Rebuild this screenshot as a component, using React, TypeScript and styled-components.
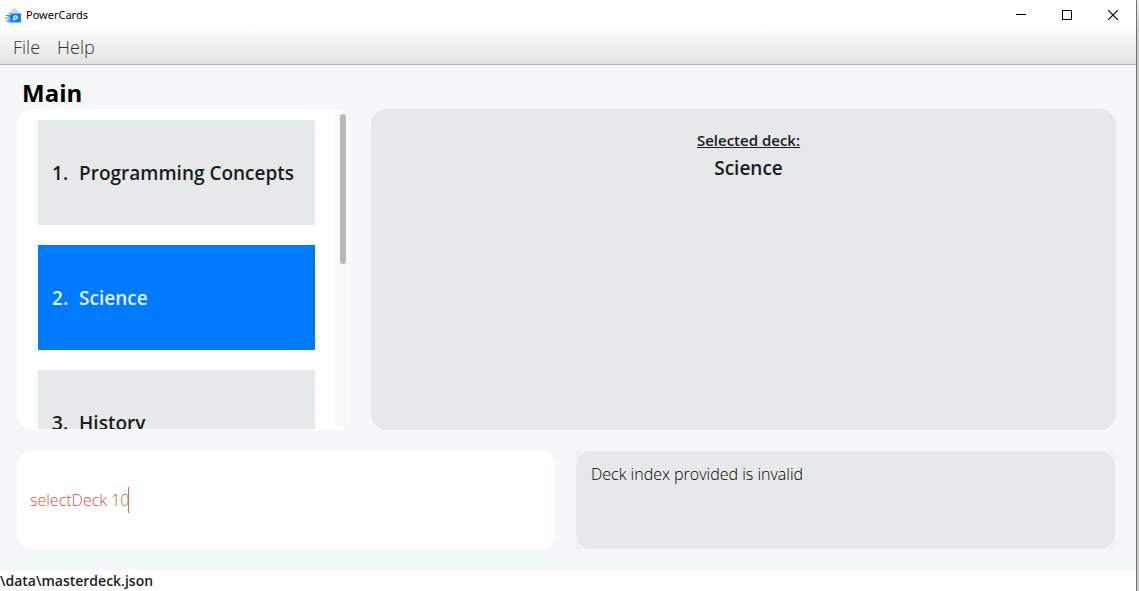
import React, { useState } from "react";
import styled, { createGlobalStyle } from "styled-components";

const GlobalStyle = createGlobalStyle`
  * { box-sizing: border-box; }
  body {
    margin: 0;
    background: #c8c8c8;
    color: #1a1c1d;
    font-family: "Open Sans", "Noto Sans", sans-serif;
  }
`;

const Backdrop = styled.div`
  min-height: 100vh;
  padding-right: 2px;
  display: flex;
  background: linear-gradient(#ececec, #c8c8c8 40px);
`;

const Window = styled.div`
  flex: 1;
  min-width: 0;
  height: 100vh;
  display: flex;
  flex-direction: column;
  background: #f4f8f9;
  border-right: 1px solid #707070;
`;

const TitleBar = styled.header`
  flex: none;
  height: 31px;
  padding: 0 0 2px 5px;
  display: flex;
  align-items: center;
  gap: 5px;
  background: #fff;
  color: #000;
`;

const AppName = styled.span`
  flex: 1;
  font-family: "Noto Sans", sans-serif;
  font-size: 11px;
  line-height: 16px;
`;

const WindowControls = styled.div`
  display: flex;
`;

const WindowButton = styled.button`
  width: 46px;
  height: 28px;
  padding: 0;
  border: 0;
  display: flex;
  align-items: center;
  justify-content: center;
  background: none;
  color: #000;
`;

const MenuBar = styled.nav`
  flex: none;
  height: 34px;
  padding: 0 13px 2px;
  display: flex;
  align-items: center;
  gap: 17px;
  background: linear-gradient(#fbfbfb, #e3e3e3);
  border-bottom: 1px solid #b5b5b5;
`;

const MenuItem = styled.button`
  padding: 0;
  border: 0;
  background: none;
  color: #333;
  font: 300 18px/26px "Open Sans", sans-serif;
`;

const Content = styled.main`
  flex: 1;
  min-height: 0;
  padding: 12px 20px 20px 17px;
  display: flex;
  flex-direction: column;
`;

const Heading = styled.h1`
  margin: 0 0 0 5px;
  color: #000;
  font-size: 24px;
  line-height: 32px;
  font-weight: 700;
`;

const Upper = styled.div`
  flex: 1;
  min-height: 0;
  display: grid;
  grid-template-columns: 334fr 745fr;
  gap: 20px;
`;

const Lower = styled.div`
  flex: none;
  height: 100px;
  margin-top: 20px;
  display: grid;
  grid-template-columns: 538fr 541fr;
  gap: 20px;
`;

const DeckPanel = styled.section`
  min-width: 0;
  min-height: 0;
  padding: 1px 0;
  display: flex;
  overflow: hidden;
  background: #fff;
  border-radius: 16px;
`;

const DeckList = styled.ol`
  flex: 1;
  min-width: 0;
  margin: 0;
  padding: 10px 20px 0 21px;
  display: flex;
  flex-direction: column;
  gap: 20px;
  overflow: hidden;
  list-style: none;
`;

const DeckCard = styled.button<{ $selected: boolean }>`
  width: 100%;
  height: 105px;
  padding: 0 14px;
  border: 0;
  display: flex;
  align-items: center;
  gap: 11px;
  background: ${(p) => (p.$selected ? "#007bff" : "#e5e9ea")};
  color: ${(p) => (p.$selected ? "#e5f1ff" : "#1a1c1d")};
  font: 600 19px/26px "Open Sans", sans-serif;
  white-space: nowrap;
`;

const ScrollTrack = styled.div`
  flex: none;
  width: 16px;
  padding: 4px 5px;
  background: #fafafa;
  border-radius: 8px;
`;

const ScrollThumb = styled.div`
  height: 150px;
  border-radius: 3px;
  background: #b9b9b9;
`;

const DetailPanel = styled.section`
  padding: 18px 0 0 10px;
  background: #e5e9ea;
  border-radius: 16px;
  text-align: center;
`;

const DetailLabel = styled.h2`
  margin: 0;
  font-size: 15px;
  line-height: 26px;
  font-weight: 600;
  text-decoration: underline;
`;

const DetailName = styled.p`
  margin: 2px 0 0;
  font-size: 19px;
  line-height: 26px;
  font-weight: 600;
`;

const CommandBox = styled.form`
  padding: 0 13px;
  display: flex;
  align-items: center;
  background: #fff;
  border-radius: 16px;
`;

const CommandInput = styled.input`
  field-sizing: content;
  padding: 0;
  border: 0;
  outline: 0;
  background: none;
  color: #d9543a;
  caret-color: transparent;
  font: 300 16px/26px "Open Sans", sans-serif;
`;

const Caret = styled.span`
  flex: none;
  width: 1px;
  height: 26px;
  margin-left: -1px;
  background: #dc6a54;
`;

const ResultFrame = styled.div`
  margin: 1px;
  display: flex;
  background: #f2f2f2;
`;

const Result = styled.output`
  flex: 1;
  padding: 10px 15px;
  background: #e5e9ea;
  border-radius: 16px;
  color: #000;
  font-size: 16px;
  line-height: 26px;
  font-weight: 300;
`;

const StatusBar = styled.footer`
  flex: none;
  height: 21px;
  background: #fff;
  font-size: 14px;
  line-height: 21px;
  font-weight: 600;
`;

const decks = ["Programming Concepts", "Science", "History"];

const Logo = () => (
  <svg width="16" height="18" viewBox="0 0 16 18" aria-hidden="true">
    <path d="M3.5 8 8.500 2.500Q9.500 1.500 10.500 2.500L15.500 8Z" fill="#d6d9dc" />
    <path d="M3.500 7.500H16V15.500Q16 16.500 15 16.500H3Q2 16.500 2 15.500L3.500 13Z" fill="#1183f5" />
    <path d="M1 9H5.500M0 12H5M1 14.500H5" stroke="#fff" strokeWidth="2.200" />
    <path d="M1 9.500H6M0 12H5.500M1.500 14.500H6" stroke="#2d93f5" strokeWidth="1" />
    <path d="M8.500 14.500 9.500 10H11.500Q13 11.500 11 13H9.500" fill="none" stroke="#fff" strokeWidth="1.200" />
  </svg>
);

export default function App() {
  const [selected, setSelected] = useState(1);
  const [command, setCommand] = useState("selectDeck 10");

  return (
    <Backdrop>
      <GlobalStyle />
      <Window>
        <TitleBar>
          <Logo />
          <AppName>PowerCards</AppName>
          <WindowControls>
            <WindowButton aria-label="Minimize">
              <svg width="10" height="10" shapeRendering="crispEdges"><path d="M0 4.500H10" stroke="#000" /></svg>
            </WindowButton>
            <WindowButton aria-label="Maximize">
              <svg width="10" height="10" shapeRendering="crispEdges"><path d="M.5.5H9.5V9.5H.5Z" fill="none" stroke="#000" /></svg>
            </WindowButton>
            <WindowButton aria-label="Close">
              <svg width="10" height="10"><path d="M0 0 10 10M10 0 0 10" stroke="#000" strokeWidth="1.2" /></svg>
            </WindowButton>
          </WindowControls>
        </TitleBar>
        <MenuBar>
          <MenuItem>File</MenuItem>
          <MenuItem>Help</MenuItem>
        </MenuBar>
        <Content>
          <Heading>Main</Heading>
          <Upper>
            <DeckPanel aria-label="Decks">
              <DeckList>
                {decks.map((name, i) => (
                  <li key={name}>
                    <DeckCard $selected={i === selected} onClick={() => setSelected(i)}>
                      <span>{i + 1}.</span>
                      <span>{name}</span>
                    </DeckCard>
                  </li>
                ))}
              </DeckList>
              <ScrollTrack>
                <ScrollThumb />
              </ScrollTrack>
            </DeckPanel>
            <DetailPanel>
              <DetailLabel>Selected deck:</DetailLabel>
              <DetailName>{decks[selected]}</DetailName>
            </DetailPanel>
          </Upper>
          <Lower>
            <CommandBox onSubmit={(e) => e.preventDefault()}>
              <CommandInput
                aria-label="Command"
                value={command}
                onChange={(e) => setCommand(e.target.value)}
              />
              <Caret />
            </CommandBox>
            <ResultFrame>
              <Result>Deck index provided is invalid</Result>
            </ResultFrame>
          </Lower>
        </Content>
        <StatusBar>\data\masterdeck.json</StatusBar>
      </Window>
    </Backdrop>
  );
}
